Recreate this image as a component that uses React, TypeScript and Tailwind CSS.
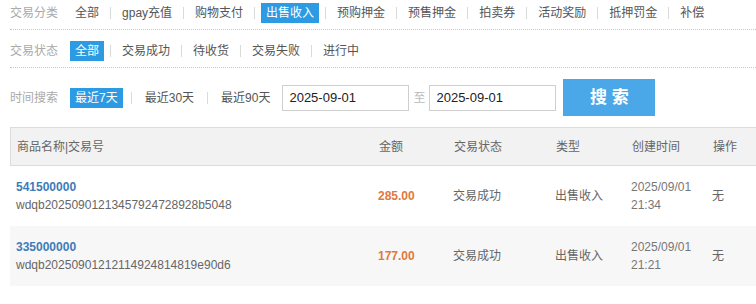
import React from "react";

const font = { fontFamily: '"Liberation Sans", Arial, "Noto Sans CJK SC", sans-serif' };

const categories = ["全部", "gpay充值", "购物支付", "出售收入", "预购押金", "预售押金", "拍卖券", "活动奖励", "抵押罚金", "补偿"];
const statuses = ["全部", "交易成功", "待收货", "交易失败", "进行中"];
const ranges = ["最近7天", "最近30天", "最近90天"];

const rows = [
  {
    name: "541500000",
    order: "wdqb20250901213457924728928b5048",
    amount: "285.00",
    status: "交易成功",
    type: "出售收入",
    date: "2025/09/01",
    time: "21:34",
  },
  {
    name: "335000000",
    order: "wdqb20250901212114924814819e90d6",
    amount: "177.00",
    status: "交易成功",
    type: "出售收入",
    date: "2025/09/01",
    time: "21:21",
  },
];

function FilterItems({ items, active, gap }: { items: string[]; active: number; gap: string }) {
  return (
    <div className="flex items-center">
      {items.map((item, i) => (
        <React.Fragment key={item}>
          {i > 0 && <span className={`h-[12px] w-px bg-[#dadada] ${gap}`} />}
          <span
            className={`h-[20px] px-[5px] leading-[20px] ${
              i === active ? "bg-[#2d9be3] text-white" : "text-[#555]"
            }`}
          >
            {item}
          </span>
        </React.Fragment>
      ))}
    </div>
  );
}

function DateInput({ value }: { value: string }) {
  return (
    <div className="flex h-[26px] w-[127px] items-center border border-[#cfcfcf] pl-[6px] text-[13px] text-[#222]">
      {value}
    </div>
  );
}

export default function App() {
  return (
    <div className="h-[304px] w-[756px] overflow-hidden bg-white text-[12px]" style={font}>
      <div className="ml-[10px] flex items-center border-b border-dotted border-[#c8c8c8] pt-[3px] pb-[6px]">
        <span className="mr-[12px] text-[#aaa]">交易分类</span>
        <FilterItems items={categories} active={3} gap="mx-[6px]" />
      </div>
      <div className="ml-[10px] flex items-center border-b border-dotted border-[#c8c8c8] pt-[11px] pb-[6px]">
        <span className="mr-[12px] text-[#aaa]">交易状态</span>
        <FilterItems items={statuses} active={0} gap="mx-[6px]" />
      </div>

      <div className="ml-[10px] flex h-[59px] items-center">
        <span className="mr-[12px] text-[#aaa]">时间搜索</span>
        <FilterItems items={ranges} active={0} gap="mx-[8px]" />
        <div className="ml-[7px]">
          <DateInput value="2025-09-01" />
        </div>
        <span className="mx-[4px] text-[#bbb]">至</span>
        <DateInput value="2025-09-01" />
        <button className="ml-[7px] h-[37px] w-[92px] bg-[#4aa7e8] text-[17px] font-bold text-white">
          搜 索
        </button>
      </div>

      <div className="ml-[10px]">
        <div className="grid h-[39px] grid-cols-[361px_75px_102px_76px_81px_1fr] items-center border-y border-l border-[#dcdcdc] bg-[#f2f2f2] text-[#666]">
          <span className="pl-[6px]">商品名称|交易号</span>
          <span className="pl-[7px]">金额</span>
          <span className="pl-[7px]">交易状态</span>
          <span className="pl-[7px]">类型</span>
          <span className="pl-[7px]">创建时间</span>
          <span className="pl-[7px]">操作</span>
        </div>
        {rows.map((r, i) => (
          <div
            key={r.name}
            className={`grid h-[60px] grid-cols-[361px_75px_102px_76px_81px_1fr] items-center leading-[18px] text-[#666] ${
              i % 2 === 1 ? "bg-[#f7f7f7]" : "bg-white"
            }`}
          >
            <div className="pl-[6px]">
              <div className="font-bold text-[#3d7cb9]">{r.name}</div>
              <div className="text-[#666]">{r.order}</div>
            </div>
            <span className="pl-[7px] font-bold text-[#e0793c]">{r.amount}</span>
            <span className="pl-[7px]">{r.status}</span>
            <span className="pl-[7px]">{r.type}</span>
            <div className="pl-[7px] text-[#777]">
              <div>{r.date}</div>
              <div>{r.time}</div>
            </div>
            <span className="pl-[7px]">无</span>
          </div>
        ))}
      </div>
    </div>
  );
}
